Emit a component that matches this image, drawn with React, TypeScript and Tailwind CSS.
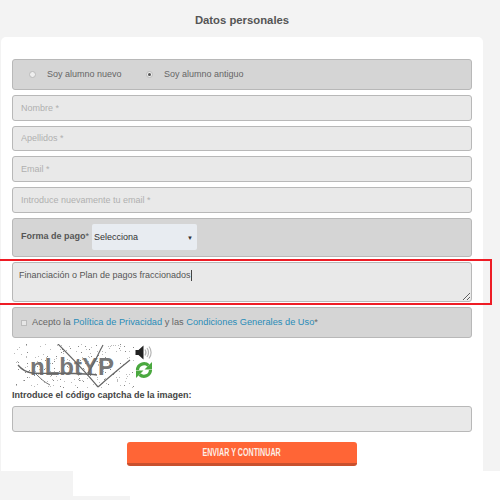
import React from 'react';

const font = "font-['Liberation_Sans',Arial,sans-serif]";
const fieldClass = 'h-[25.67px] w-full shrink-0 rounded-[3px] border border-[#b8b8b8] bg-[#e9e9e9] px-2 text-[9px] text-[#555] outline-none placeholder:text-[#b0b0b0]';

// speckle of the captcha picture
const noise: number[][] = [];
let seed = 7;
for (let i = 0; i < 220; i++) {
  seed = (seed * 1103515 + 12345) % 2147483;
  const x = (seed >> 6) % 120;
  seed = (seed * 1103515 + 12345) % 2147483;
  noise.push([x, (seed >> 6) % 44]);
}

const Captcha = () => (
  <div className="flex items-start gap-[1px]">
    <svg width="120" height="44" viewBox="0 0 120 44" className="bg-white">
      {noise.map(([x, y], i) => (
        <rect key={i} x={x} y={y} width="1" height="1" fill={i % 3 === 0 ? '#888' : '#bbb'} />
      ))}
      <text x="16" y="31" fontFamily="Liberation Sans, sans-serif" fontWeight="700" fontSize="24" fill="#777">nLbtYP</text>
      <path d="M43 -1 C56 12 70 26 84 43" fill="none" stroke="#666" strokeWidth="1.200" />
      <path d="M89 1 C84 10 80 20 74 29" fill="none" stroke="#666" strokeWidth="1.200" />
      <path d="M116 16 C106 24 94 34 84 43" fill="none" stroke="#666" strokeWidth="1.200" />
      <path d="M4 21 C8 26 12 28 18 29 S60 28 83 31" fill="none" stroke="#666" strokeWidth="1.300" />
      <path d="M22 30 C26 34 30 38 36 41" fill="none" stroke="#777" strokeWidth="1" />
    </svg>
    <div className="flex flex-col gap-[1px] pt-[1px]">
      {/* audio */}
      <svg width="18" height="15" viewBox="0 0 18 15">
        <path d="M0.500 5h3L8.500 0.500v14L3.500 10h-3z" fill="#222" />
        <path d="M10 4.500c1.200 1.800 1.200 4.200 0 6M12 3c2 2.500 2 6.500 0 9M14 1.500c2.800 3.500 2.800 8.500 0 12" fill="none" stroke="#b5b5b5" strokeWidth="1.200" />
      </svg>
      {/* reload */}
      <svg width="18" height="18" viewBox="0 0 18 18">
        <path d="M2.500 9a6.500 6.500 0 0 1 11-4.500" fill="none" stroke="#4aa83f" strokeWidth="3.200" />
        <path d="M17 1v7.500h-7.500z" fill="#4aa83f" />
        <path d="M15.500 9a6.500 6.500 0 0 1-11 4.500" fill="none" stroke="#4aa83f" strokeWidth="3.200" />
        <path d="M1 17v-7.500h7.500z" fill="#4aa83f" />
      </svg>
    </div>
  </div>
);

export default function App() {
  return (
    <div className={`${font} relative h-[500px] w-[500px] overflow-hidden bg-white`}>
      <div className="h-[471px] bg-[#f3f3f3] pl-[1px] pr-[17px]">
        <h2 className="flex h-[37px] items-center justify-center pt-[3px] text-[11.300px] font-bold text-[#555]">Datos personales</h2>
        <div className="flex h-[434px] flex-col rounded-t-[5px] bg-white px-[11px] pt-[22px]">
          <div className="flex h-[31px] shrink-0 items-center rounded-[3px] border border-[#b8b8b8] bg-[#d5d5d5] pl-[16px] pt-[1px] text-[9px] text-[#666]">
            <span className="h-[7px] w-[7px] -translate-y-[1px] rounded-full border border-[#bbb] bg-[#eee]" />
            <span className="ml-[11px]">Soy alumno nuevo</span>
            <span className="ml-[24.500px] flex h-[7px] w-[7px] -translate-y-[1px] items-center justify-center rounded-full border border-[#bbb] bg-[#eee]">
              <span className="h-[3px] w-[3px] rounded-full bg-[#555]" />
            </span>
            <span className="ml-[11px]">Soy alumno antiguo</span>
          </div>
          <div className="mt-[5px] flex flex-col gap-[5px]">
            <input className={fieldClass} placeholder="Nombre *" />
            <input className={fieldClass} placeholder="Apellidos *" />
            <input className={fieldClass} placeholder="Email *" />
            <input className={fieldClass} placeholder="Introduce nuevamente tu email *" />
          </div>
          <div className="mt-[5px] flex h-[39px] shrink-0 items-center rounded-[3px] border border-[#b8b8b8] bg-[#d5d5d5] pl-[8px] text-[9px]">
            <span className="font-bold text-[#555]">Forma de pago</span>
            <span className="text-[#555]">*</span>
            <div className="ml-[3px] flex h-[26px] w-[105px] items-center justify-between rounded-[2px] bg-[#e8ecf1] pl-[2px] pr-[4px] pt-[1px] text-[#333]">
              <span>Selecciona</span>
              <span className="text-[6px] leading-none">▼</span>
            </div>
          </div>
          <div className="relative mt-[5px] h-[40px] shrink-0">
            <textarea
              className="block h-full w-full rounded-[3px] border border-[#b8b8b8] bg-[#e9e9e9] px-[6px] pb-[4px] pt-[5px] text-[9px] leading-[15px] text-[#555] outline-none"
              defaultValue="Financiación o Plan de pagos fraccionados"
            />
            <span className="absolute left-[179px] top-[8px] h-[11px] w-[1px] bg-[#444]" />
          </div>
          <div className="mt-[5px] flex h-[31px] shrink-0 items-center rounded-[3px] border border-[#b8b8b8] bg-[#d5d5d5] pl-[8px] pt-[2px] text-[9.250px] text-[#666]">
            <span className="h-[6px] w-[6px] border border-[#bbb] bg-[#e6e6e6]" />
            <span className="ml-[5px]">
              Acepto la <a className="text-[#2a8cb8]">Política de Privacidad</a> y las <a className="text-[#2a8cb8]">Condiciones Generales de Uso</a>*
            </span>
          </div>
          <div className="mt-[6px] pl-[2px]">
            <Captcha />
          </div>
          <label className="mt-[1px] text-[9px] leading-[12px] font-bold text-[#444]">Introduce el código captcha de la imagen:</label>
          <input className={`${fieldClass} mt-[5.500px]`} />
          <button className="mx-auto mt-[10px] h-[24px] w-[230px] shrink-0 rounded-[3px] border-b-[3px] border-[#c9502d] bg-[#ff6536] pt-[1px] text-[10.500px] font-bold text-[#fdeee6]">
            <span className="inline-block scale-x-[0.68] whitespace-nowrap">ENVIAR Y CONTINUAR</span>
          </button>
        </div>
      </div>
      <div className="h-[25px] w-[73px] bg-[#f3f3f3]" />
      <div className="h-[4px] w-[130px] bg-[#f3f3f3]" />
      {/* red highlight drawn over the textarea */}
      <div className="absolute left-[-3px] top-[259px] h-[46px] w-[495px] border-2 border-[#ee1c25]" />
    </div>
  );
}
